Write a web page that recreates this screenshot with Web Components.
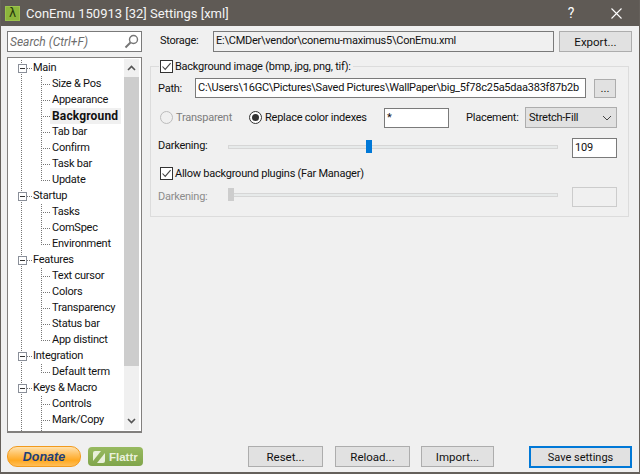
<!DOCTYPE html>
<html>
<head>
<meta charset="utf-8">
<title>ConEmu Settings</title>
<style>
  html, body { margin: 0; padding: 0; }
  body { font: 11px Roboto, "Noto Sans", sans-serif; letter-spacing: -0.24px; color: #111; }
</style>
</head>
<body>
<template id="tree-tpl">
  <style>
    :host { display: block; width: 135px; height: 376px; box-sizing: border-box; border: 1px solid #82807e; border-bottom-width: 2px; background: #fff; overflow: hidden; }
    .wrap { display: flex; height: 100%; }
    .rows { flex: 1; padding-top: 2px; overflow: hidden; }
    .bar { width: 15px; background: #f0f0f0; margin: 1px 2px 1px 0; display: flex; flex-direction: column; }
    .btn { height: 18px; display: flex; align-items: center; justify-content: center; flex: none; }
    .thumb { height: 289px; background: #cdcdcd; flex: none; }
    .gap { flex: 1; }
  </style>
  <div class="wrap">
    <div class="rows"><slot></slot></div>
    <div class="bar">
      <div class="btn"><svg width="9" height="6" viewBox="0 0 9 6"><path d="M1 5 L4.5 1.5 L8 5" fill="none" stroke="#555" stroke-width="1.6"/></svg></div>
      <div class="thumb"></div>
      <div class="gap"></div>
      <div class="btn"><svg width="9" height="6" viewBox="0 0 9 6"><path d="M1 1 L4.5 4.5 L8 1" fill="none" stroke="#555" stroke-width="1.6"/></svg></div>
    </div>
  </div>
</template>

<template id="item-tpl">
  <style>
    :host { display: block; height: 16px; line-height: 16px; white-space: nowrap; color: #111; --dots: repeating-linear-gradient(to bottom, #777 0 1px, transparent 1px 2px); --hdots: repeating-linear-gradient(to right, #777 0 1px, transparent 1px 2px); background-repeat: no-repeat; }
    :host([kind="root"]) { padding-left: 23px; background-image: var(--dots), var(--hdots); background-size: 1px 16px, 5px 1px; background-position: 13px 0, 19px 8px; }
    :host([kind="child"]) { padding-left: 42px; background-image: var(--dots), var(--dots), var(--hdots); background-size: 1px 16px, 1px 16px, 9px 1px; background-position: 13px 0, 33px 0, 33px 8px; }
    :host([kind="last"]) { padding-left: 42px; background-image: var(--dots), var(--dots), var(--hdots); background-size: 1px 16px, 1px 8px, 9px 1px; background-position: 13px 0, 33px 0, 33px 8px; }
    .row { display: flex; align-items: center; height: 16px; }
    .box { width: 9px; height: 9px; margin: 0 5px 0 -13px; flex: none; box-sizing: border-box; border: 1px solid #8a8f99; background: #fff; display: flex; align-items: center; justify-content: center; }
    .box i { display: block; width: 5px; height: 1px; background: #333; }
    :host(:not([kind="root"])) .box { display: none; }
    .label { padding: 0 1px 0 2px; display: block; }
    :host([kind="root"]) .label { padding-left: 1px; }
    :host([selected]) .label { background: #f0f0f0; font-size: 12px; letter-spacing: 0.15px; font-weight: 700; width: 71px; box-sizing: border-box; }
  </style>
  <div class="row"><span class="box"><i></i></span><span class="label"><slot></slot></span></div>
</template>

<template id="button-tpl">
  <style>
    :host { display: inline-flex; box-sizing: border-box; height: 21px; border: 1px solid #adadad; background: #e1e1e1; align-items: center; justify-content: center; font-size: 11.5px; letter-spacing: 0; color: #111; flex: none; }
    :host([primary]) { border: 2px solid #0078d7; height: 22px; font-size: 11px; }
  </style>
  <slot></slot>
</template>

<template id="field-tpl">
  <style>
    :host { display: block; box-sizing: border-box; height: 20px; border: 1px solid #7a7a7a; background: #fff; padding: 0 2px; line-height: 18px; white-space: nowrap; overflow: hidden; color: #111; flex: none; }
    :host([readonly]) { background: #f0f0f0; }
    :host([disabled]) { background: #f0f0f0; border-color: #ccc; }
  </style>
  <slot></slot>
</template>

<template id="check-tpl">
  <style>
    :host { display: inline-flex; align-items: center; gap: 2px; height: 16px; white-space: nowrap; color: #111; background: #f0f0f0; }
    .box { width: 13px; height: 13px; box-sizing: border-box; border: 1px solid #333; background: #fff; display: flex; flex: none; }
  </style>
  <span class="box"><svg width="11" height="11" viewBox="0 0 11 11"><path d="M1.5 5.5 L4.2 8.4 L9.6 2.2" fill="none" stroke="#444" stroke-width="1.1"/></svg></span><slot></slot>
</template>

<template id="radio-tpl">
  <style>
    :host { display: inline-flex; align-items: center; gap: 3px; height: 16px; white-space: nowrap; color: #111; }
    :host([disabled]) { color: #7d7d7d; }
    .dot { width: 13px; height: 13px; box-sizing: border-box; border: 1px solid #333; border-radius: 50%; background: #fff; display: flex; align-items: center; justify-content: center; flex: none; }
    :host([disabled]) .dot { border-color: #bcbcbc; background: #f0f0f0; }
    .dot i { width: 7px; height: 7px; border-radius: 50%; background: #333; }
    :host([disabled]) .dot i { display: none; }
  </style>
  <span class="dot"><i></i></span><slot></slot>
</template>

<template id="slider-tpl">
  <style>
    :host { display: block; position: relative; height: 12px; flex: 1; }
    .track { position: absolute; left: 0; right: 0; top: 5px; height: 4px; box-sizing: border-box; background: #e7eaea; border: 1px solid #d6d6d6; }
    .thumb { position: absolute; top: 0; width: 6px; height: 13px; background: var(--thumb, #0078d7); left: var(--pos, 0); }
  </style>
  <div class="track"></div><div class="thumb"></div>
</template>

<template id="select-tpl">
  <style>
    :host { display: flex; align-items: center; justify-content: space-between; box-sizing: border-box; width: 92px; height: 21px; border: 1px solid #adadad; background: #e1e1e1; padding: 0 4px 0 3px; color: #111; flex: none; }
  </style>
  <slot></slot>
  <svg width="10" height="6" viewBox="0 0 10 6"><path d="M1 1 L5 5 L9 1" fill="none" stroke="#444" stroke-width="1"/></svg>
</template>

<template id="group-tpl">
  <style>
    :host { display: block; }
    fieldset { margin: 0; box-sizing: border-box; width: 479px; height: 159px; border: 1px solid #dcdcdc; padding: 0; }
    legend { margin-left: 8px; padding: 0 2px 0 1px; height: 16px; }
  </style>
  <fieldset><legend><slot name="legend"></slot></legend><slot></slot></fieldset>
</template>

<template id="titlebar-tpl">
  <style>
    :host { display: flex; align-items: center; height: 26px; background: #5f5a55; color: #fff; font-size: 13px; letter-spacing: 0; flex: none; }
    .icon { width: 15px; height: 15px; margin: 0 6px 0 4px; background: #8cb53c; border: 1px solid #9cc24c; box-sizing: border-box; color: #24340a; font: 400 12px/13px "DejaVu Sans", sans-serif; text-align: center; flex: none; }
    .title { flex: 1; color: #f4f4f4; }
    .help { width: 14px; text-align: center; font-size: 14px; margin-right: 33px; }
    .close { margin-right: 17px; display: flex; }
  </style>
  <span class="icon">λ</span><span class="title"><slot></slot></span>
  <span class="help">?</span>
  <span class="close"><svg width="11" height="11" viewBox="0 0 11 11"><path d="M0.5 0.5 L10.5 10.5 M10.5 0.5 L0.5 10.5" stroke="#fff" stroke-width="1.1" fill="none"/></svg></span>
</template>

<template id="donate-tpl">
  <style>
    :host { display: inline-flex; box-sizing: border-box; width: 74px; height: 21px; border: 1px solid #f29a1d; border-radius: 10px; background: linear-gradient(to bottom, #ffe2ae 0, #ffc365 35%, #ffa922 70%, #ffbe58 100%); align-items: center; justify-content: center; font: italic 700 12.5px "Liberation Sans", sans-serif; letter-spacing: 0; color: #1d3f78; flex: none; }
  </style>
  <slot></slot>
</template>

<template id="flattr-tpl">
  <style>
    :host { display: inline-flex; box-sizing: border-box; width: 55px; height: 19px; border-radius: 4px; background: linear-gradient(to bottom, #98ba60, #80a54b); align-items: center; gap: 3px; padding-left: 4px; font: 700 11.5px "Liberation Sans", sans-serif; letter-spacing: 0; color: #eaf1dc; flex: none; }
    svg { flex: none; }
  </style>
  <svg width="14" height="14" viewBox="0 0 14 14"><path d="M1 11 V3 a2 2 0 0 1 2-2 H9 Z" fill="#e9f0da"/><path d="M13 3 V11 a2 2 0 0 1-2 2 H5 Z" fill="#e9f0da"/></svg>
  <slot></slot>
</template>

<template id="window-tpl">
  <style>
    :host { display: flex; flex-direction: column; box-sizing: border-box; width: 640px; height: 474px; border: 1px solid #65605b; border-width: 0 1px 2px 1px; background: #f0f0f0; overflow: hidden; }
    .main { flex: 1; display: flex; flex-direction: column; }
    .cols { display: flex; padding: 5px 0 0 6px; }
    .side { width: 135px; display: flex; flex-direction: column; gap: 5px; flex: none; }
    .pane { margin-left: 8px; display: flex; flex-direction: column; }
    .foot { display: flex; align-items: flex-start; padding: 13px 0 0 6px; }
  </style>
  <slot name="title"></slot>
  <div class="main">
    <div class="cols">
      <div class="side"><slot name="side"></slot></div>
      <div class="pane"><slot name="pane"></slot></div>
    </div>
    <div class="foot"><slot name="foot"></slot></div>
  </div>
</template>

<template id="pane-tpl">
  <style>
    :host { display: flex; flex-direction: column; width: 482px; color: #111; }
    .storage { display: flex; align-items: flex-start; margin-left: 10px; height: 21px; }
    .storage .lbl { width: 53px; flex: none; line-height: 20px; }
    .storage ::slotted([slot="store"]) { width: 341px; height: 21px; }
    .storage ::slotted([slot="export"]) { width: 73px; margin-left: 5px; }
    .group { margin-top: 6px; }
  </style>
  <div class="storage"><span class="lbl">Storage:</span><slot name="store"></slot><slot name="export"></slot></div>
  <div class="group"><slot></slot></div>
</template>

<conemu-window>
  <conemu-titlebar slot="title">ConEmu 150913 [32] Settings [xml]</conemu-titlebar>

  <search-box slot="side">Search (Ctrl+F)</search-box>
  <settings-tree slot="side">
    <tree-item kind="root">Main</tree-item>
    <tree-item kind="child">Size &amp; Pos</tree-item>
    <tree-item kind="child">Appearance</tree-item>
    <tree-item kind="child" selected>Background</tree-item>
    <tree-item kind="child">Tab bar</tree-item>
    <tree-item kind="child">Confirm</tree-item>
    <tree-item kind="child">Task bar</tree-item>
    <tree-item kind="last">Update</tree-item>
    <tree-item kind="root">Startup</tree-item>
    <tree-item kind="child">Tasks</tree-item>
    <tree-item kind="child">ComSpec</tree-item>
    <tree-item kind="last">Environment</tree-item>
    <tree-item kind="root">Features</tree-item>
    <tree-item kind="child">Text cursor</tree-item>
    <tree-item kind="child">Colors</tree-item>
    <tree-item kind="child">Transparency</tree-item>
    <tree-item kind="child">Status bar</tree-item>
    <tree-item kind="last">App distinct</tree-item>
    <tree-item kind="root">Integration</tree-item>
    <tree-item kind="last">Default term</tree-item>
    <tree-item kind="root">Keys &amp; Macro</tree-item>
    <tree-item kind="child">Controls</tree-item>
    <tree-item kind="child">Mark/Copy</tree-item>
    <tree-item kind="child">Paste</tree-item>
  </settings-tree>

  <settings-pane slot="pane">
    <text-field slot="store" readonly>E:\CMDer\vendor\conemu-maximus5\ConEmu.xml</text-field>
    <win-button slot="export">Export...</win-button>
    <background-group></background-group>
  </settings-pane>

  <footer-bar slot="foot">
    <donate-button>Donate</donate-button>
    <flattr-button>Flattr</flattr-button>
    <win-button style="width:75px;margin-left:105px">Reset...</win-button>
    <win-button style="width:75px;margin-left:12px">Reload...</win-button>
    <win-button style="width:73px;margin-left:11px">Import...</win-button>
    <win-button primary style="width:103px;margin-left:35px">Save settings</win-button>
  </footer-bar>
</conemu-window>

<template id="search-tpl">
  <style>
    :host { display: flex; align-items: center; box-sizing: border-box; width: 135px; height: 21px; border: 1px solid #7a7a7a; background: #fff; padding: 0 2px; font-style: italic; font-size: 12px; letter-spacing: 0; color: #6d6d6d; }
    .t { flex: 1; }
    svg { flex: none; }
  </style>
  <span class="t"><slot></slot></span>
  <svg width="15" height="15" viewBox="0 0 15 15"><circle cx="9.5" cy="5.5" r="4" fill="none" stroke="#777" stroke-width="1.4"/><path d="M6.5 8.5 L1.5 13.5" stroke="#777" stroke-width="2"/></svg>
</template>

<template id="bg-tpl">
  <style>
    :host { display: block; color: #111; }
    .row { display: flex; align-items: center; }
    .path { margin: 4px 0 0 7px; height: 20px; }
    .path .lbl { width: 37px; flex: none; }
    .path .p { width: 391px; }
    .path .more { width: 22px; height: 19px; margin-left: 8px; }
    .mode { margin: 9px 0 0 9px; height: 21px; }
    .mode .star { width: 65px; margin-left: 15px; }
    .mode .pl { margin-left: 17px; width: 59px; }
    .dark { margin: 10px 0 0 7px; height: 20px; align-items: flex-start; }
    .dark .lbl { width: 70px; flex: none; line-height: 16px; }
    .dark slider-bar { flex: none; width: 330px; margin-top: 2px; }
    .dark .v { width: 45px; margin-left: 14px; }
    .allow { margin: 7px 0 0 9px; height: 16px; }
    .off { margin: 6px 0 0 7px; height: 20px; color: #8c8c8c; align-items: flex-start; }
    .off .lbl { width: 70px; flex: none; line-height: 19px; }
    .off slider-bar { flex: none; width: 330px; margin-top: 1px; }
    .off .v { width: 45px; margin-left: 14px; }
  </style>
  <win-group>
    <check-box slot="legend">Background image (bmp, jpg, png, tif):</check-box>
    <div class="row path"><span class="lbl">Path:</span><text-field class="p">C:\Users\16GC\Pictures\Saved Pictures\WallPaper\big_5f78c25a5daa383f87b2b</text-field><win-button class="more">...</win-button></div>
    <div class="row mode">
      <radio-option disabled style="width:89px">Transparent</radio-option>
      <radio-option style="width:120px">Replace color indexes</radio-option>
      <text-field class="star">*</text-field>
      <span class="pl">Placement:</span>
      <drop-select>Stretch-Fill</drop-select>
    </div>
    <div class="row dark"><span class="lbl">Darkening:</span><slider-bar style="--pos:138px"></slider-bar><text-field class="v">109</text-field></div>
    <div class="row allow"><check-box>Allow background plugins (Far Manager)</check-box></div>
    <div class="row off"><span class="lbl">Darkening:</span><slider-bar style="--pos:0px;--thumb:#cdcdcd"></slider-bar><text-field class="v" disabled></text-field></div>
  </win-group>
</template>

<template id="foot-tpl">
  <style>
    :host { display: flex; align-items: flex-start; }
    ::slotted(flattr-button) { margin: 1px 0 0 7px; }
  </style>
  <slot></slot>
</template>

<script>
  function register(tag, tplId) {
    customElements.define(tag, class extends HTMLElement {
      constructor() {
        super();
        let root = this.attachShadow({ mode: "open" });
        root.appendChild(document.getElementById(tplId).content.cloneNode(true));
      }
    });
  }
  register("conemu-window", "window-tpl");
  register("conemu-titlebar", "titlebar-tpl");
  register("search-box", "search-tpl");
  register("settings-tree", "tree-tpl");
  register("tree-item", "item-tpl");
  register("settings-pane", "pane-tpl");
  register("background-group", "bg-tpl");
  register("win-group", "group-tpl");
  register("win-button", "button-tpl");
  register("text-field", "field-tpl");
  register("check-box", "check-tpl");
  register("radio-option", "radio-tpl");
  register("slider-bar", "slider-tpl");
  register("drop-select", "select-tpl");
  register("donate-button", "donate-tpl");
  register("flattr-button", "flattr-tpl");
  register("footer-bar", "foot-tpl");
</script>
</body>
</html>
